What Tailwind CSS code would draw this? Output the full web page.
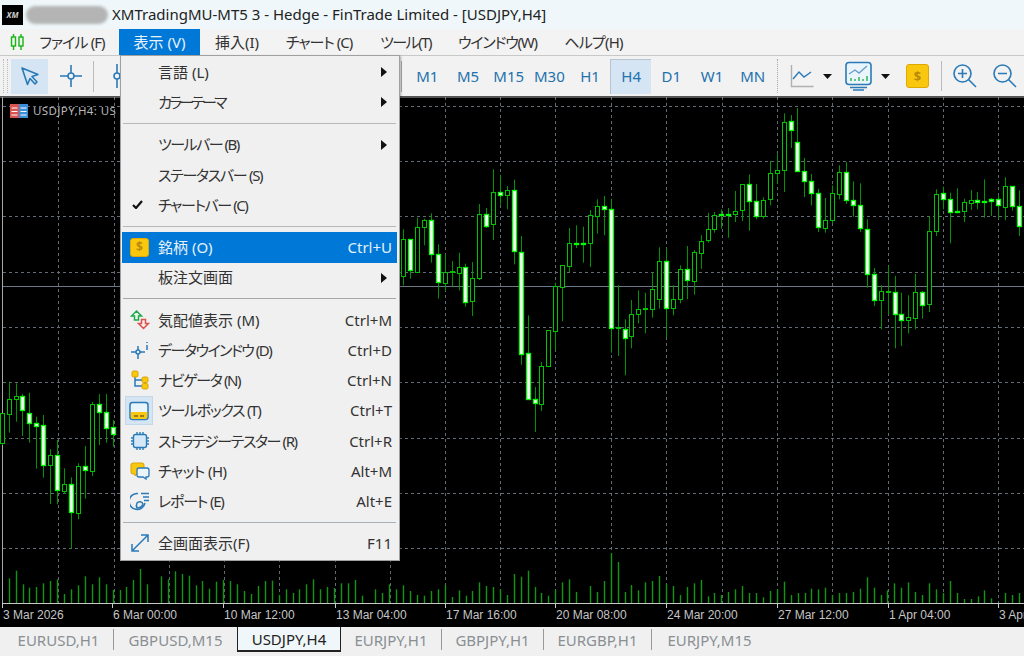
<!DOCTYPE html>
<html lang="ja">
<head>
<meta charset="utf-8">
<script src="https://cdn.jsdelivr.net/npm/@tailwindcss/browser@4"></script>
<title>MT5</title>
</head>
<body>
<div class="relative flex h-[656px] w-[1024px] flex-col overflow-hidden bg-[#f0f0f0] font-['Noto_Sans','Noto_Sans_CJK_JP',sans-serif] text-[#222] [font-feature-settings:'palt']">

  <!-- title bar -->
  <div class="flex h-[29px] items-center bg-[#eff7fa] pl-[2px]">
    <div class="flex h-[20px] w-[21px] items-center justify-center bg-black text-[8px] font-bold italic leading-none text-[#ccc]">XM</div>
    <div class="ml-[3px] h-[18px] w-[82px] rounded-full bg-[#b4b4b4] blur-[1.5px]"></div>
    <div class="ml-[4px] text-[15px] leading-none text-[#222]">XMTradingMU-MT5 3 - Hedge - FinTrade Limited - [USDJPY,H4]</div>
  </div>

  <!-- menu bar -->
  <div class="flex h-[26px] items-stretch bg-[#f3f3f3] text-[15px] text-[#333]">
    <div class="flex w-[25px] items-center justify-end">
      <svg width="15" height="18" viewBox="0 0 15 18" fill="none" stroke="#19b319" stroke-width="1.4"><path d="M3.5 1v16M11 1v16"/><rect x="1.5" y="4" width="4" height="9" fill="#e8f8e8"/><rect x="9" y="4" width="4" height="9" fill="#e8f8e8"/></svg>
    </div>
    <div class="flex w-[94px] items-center justify-center tracking-[-0.9px]">ファイル (F)</div>
    <div class="flex w-[81px] items-center justify-center bg-[#0078d7] text-[#e8f2fb]">表示 (V)</div>
    <div class="flex w-[74px] items-center justify-center">挿入(I)</div>
    <div class="flex w-[90px] items-center justify-center tracking-[-1px]">チャート (C)</div>
    <div class="flex w-[83px] items-center justify-center tracking-[-1.5px]">ツール(T)</div>
    <div class="flex w-[101px] items-center justify-center tracking-[-1.2px]">ウインドウ(W)</div>
    <div class="flex w-[91px] items-center justify-center tracking-[-0.8px]">ヘルプ(H)</div>
  </div>

  <!-- toolbar -->
  <div class="flex h-[41px] items-center border-t border-[#c8c8c8] bg-[#f2f2f2] text-[15px] text-[#2371ad]">
    <div class="ml-[3px] h-[34px] w-[5px] border-x border-dotted border-[#bbb]"></div>
    <div class="ml-[3px] flex h-[35px] w-[37px] items-center justify-center bg-[#d5e5f3]">
      <svg width="20" height="20" viewBox="0 0 20 20" fill="none" stroke="#2a7ab8" stroke-width="1.6" stroke-linejoin="round"><path d="M2 2l16 6.5-6 2 5 5.5-2 2-5-5.5-2.5 6z"/></svg>
    </div>
    <div class="ml-[3px] flex h-[35px] w-[40px] items-center justify-center">
      <svg width="24" height="24" viewBox="0 0 24 24" fill="none" stroke="#2a7ab8" stroke-width="1.6"><circle cx="12" cy="12" r="3"/><path d="M12 1v8M12 15v8M1 12h8M15 12h8"/></svg>
    </div>
    <div class="ml-[2px] h-[31px] w-px bg-[#bbb]"></div>
    <svg class="ml-[18px]" width="10" height="26" viewBox="0 0 10 26" fill="none" stroke="#2a7ab8" stroke-width="1.6"><circle cx="5" cy="13" r="3"/><path d="M5 1v9M5 16v9"/></svg>
    <div class="ml-[279px] h-[31px] w-px bg-[#aaa]"></div>
    <div class="ml-[5px] flex w-[366px] items-center">
      <div class="flex h-[35px] w-[40.7px] items-center justify-center">M1</div>
      <div class="flex h-[35px] w-[40.7px] items-center justify-center">M5</div>
      <div class="flex h-[35px] w-[40.7px] items-center justify-center">M15</div>
      <div class="flex h-[35px] w-[40.7px] items-center justify-center">M30</div>
      <div class="flex h-[35px] w-[40.7px] items-center justify-center">H1</div>
      <div class="flex h-[35px] w-[40.7px] items-center justify-center border-l border-t border-[#b8c4cf] bg-[#d5e5f3]">H4</div>
      <div class="flex h-[35px] w-[40.7px] items-center justify-center">D1</div>
      <div class="flex h-[35px] w-[40.7px] items-center justify-center">W1</div>
      <div class="flex h-[35px] w-[40.7px] items-center justify-center">MN</div>
    </div>
    <div class="ml-[4px] h-[34px] w-[3px] border-l border-dotted border-[#aaa]"></div>
    <div class="ml-[10px] flex items-center">
      <svg width="24" height="24" viewBox="0 0 24 24" fill="none" stroke-width="1.4"><path d="M1.5 1v21.5h22" stroke="#b0b0b0"/><path d="M3 15l6-7 5 5 7-5" stroke="#2a7ab8"/></svg>
    </div>
    <svg class="ml-[9px]" width="9" height="5" viewBox="0 0 9 5"><path d="M0 0h9L4.5 5z" fill="#111"/></svg>
    <svg class="ml-[13px]" width="27" height="30" viewBox="0 0 27 30" fill="none"><rect x="1" y="1.500" width="25" height="22" rx="3" fill="#eaf4fb" stroke="#2a7ab8" stroke-width="1.6"/><path d="M4 13l6-4 4 3 8-7" stroke="#6a9fc6" stroke-width="1.400"/><path d="M6 20v-3M10 20v-2M14 20v-4M18 20v-2M22 20v-5" stroke="#22b14c" stroke-width="1.400"/><path d="M5 26.500h17M8 29h11" stroke="#2a7ab8" stroke-width="1.500"/></svg>
    <svg class="ml-[9px]" width="9" height="5" viewBox="0 0 9 5"><path d="M0 0h9L4.5 5z" fill="#111"/></svg>
    <div class="ml-[16px] flex h-[24px] w-[23px] items-center justify-center rounded-[3px] border border-[#e0a800] bg-[#f9c80e] text-[13px] font-bold leading-none text-[#b98a0a]">$</div>
    <div class="ml-[12px] h-[30px] w-px bg-[#bbb]"></div>
    <svg class="ml-[11px]" width="24" height="24" viewBox="0 0 24 24" fill="none" stroke="#2a7ab8" stroke-width="1.600"><circle cx="9.500" cy="9.500" r="8.500"/><path d="M15.500 15.500L23 23M5 9.500h9M9.500 5v9"/></svg>
    <svg class="ml-[16px]" width="24" height="24" viewBox="0 0 24 24" fill="none" stroke="#2a7ab8" stroke-width="1.600"><circle cx="9.500" cy="9.500" r="8.500"/><path d="M15.500 15.500L23 23M5 9.500h9"/></svg>
  </div>

  <!-- chart -->
  <div class="relative h-[531px] w-full bg-black">
    <svg id="chart" class="block font-['Liberation_Sans',sans-serif]" width="1024" height="531" viewBox="0 96 1024 531"></svg>
    <div class="absolute left-[10px] top-[8px] flex items-center text-[11.5px] leading-none tracking-[0.4px] text-[#b8b8b8]">
      <svg width="18" height="14" viewBox="0 0 18 14"><rect width="9" height="14" fill="#d9534f"/><rect x="9" width="9" height="14" fill="#3b8fd9"/><path d="M1.500 4h6M1.500 7.500h6M1.500 11h6M10.500 4h6M10.500 7.500h6M10.500 11h6" stroke="#fff" stroke-width="1"/></svg>
      <span class="ml-[5px]">USDJPY,H4: US</span>
    </div>
  </div>

  <!-- tabs -->
  <div class="flex h-[29px] items-start bg-[#f0f0f0] text-[15px] leading-none text-[#8a8f94]">
    <div class="mt-[2px] flex h-[21px] w-[114px] items-center justify-center border-r border-[#999] pl-[4px] pt-[2px]">EURUSD,H1</div>
    <div class="mt-[2px] flex h-[21px] w-[123px] items-center justify-center pt-[2px]">GBPUSD,M15</div>
    <div class="-mt-px flex h-[26px] w-[104px] items-center justify-center border border-[#222] border-b-2 bg-[#eff7fb] pt-[1px] text-[#222]">USDJPY,H4</div>
    <div class="mt-[2px] flex h-[21px] w-[101px] items-center justify-center border-r border-[#999] pt-[2px]">EURJPY,H1</div>
    <div class="mt-[2px] flex h-[21px] w-[102px] items-center justify-center border-r border-[#999] pt-[2px]">GBPJPY,H1</div>
    <div class="mt-[2px] flex h-[21px] w-[108px] items-center justify-center border-r border-[#999] pt-[2px]">EURGBP,H1</div>
    <div class="mt-[2px] flex h-[21px] w-[115px] items-center justify-center pt-[2px]">EURJPY,M15</div>
  </div>

  <!-- dropdown -->
  <div class="absolute left-[120px] top-[55px] w-[280px] border border-[#a0a0a0] bg-[#f0f0f0] pb-[1px] pl-[1px] pr-[2px] pt-[1px] text-[15px] text-[#333] shadow-[1px_1px_2px_rgba(0,0,0,0.3)]">
    <div class="flex h-[30.25px] items-center pl-[36px] pr-[10px]"><span class="flex-1">言語 (L)</span><svg width="6" height="10" viewBox="0 0 6 10"><path d="M0 0l6 5-6 5z" fill="#111"/></svg></div>
    <div class="flex h-[30.25px] items-center pl-[36px] pr-[10px]"><span class="flex-1 tracking-[-2.8px]">カラーテーマ</span><svg width="6" height="10" viewBox="0 0 6 10"><path d="M0 0l6 5-6 5z" fill="#111"/></svg></div>
    <div class="flex h-[12px] items-center px-[1px]"><div class="h-px w-full bg-[#b8b8b8]"></div></div>
    <div class="flex h-[30.25px] items-center pl-[36px] pr-[10px]"><span class="flex-1 tracking-[-1.5px]">ツールバー (B)</span><svg width="6" height="10" viewBox="0 0 6 10"><path d="M0 0l6 5-6 5z" fill="#111"/></svg></div>
    <div class="flex h-[30.25px] items-center pl-[36px] pr-[10px]"><span class="flex-1 tracking-[-1.3px]">ステータスバー (S)</span></div>
    <div class="relative flex h-[30.25px] items-center pl-[36px] pr-[10px]"><svg class="absolute left-[10px] top-[10px]" width="11" height="9" viewBox="0 0 11 9" fill="none" stroke="#111" stroke-width="2.200"><path d="M1 5l3 3 6-7"/></svg><span class="flex-1 tracking-[-1.4px]">チャートバー (C)</span></div>
    <div class="flex h-[12px] items-center px-[1px]"><div class="h-px w-full bg-[#b8b8b8]"></div></div>
    <div class="flex h-[30.25px] items-center bg-[#0078d7] pl-[8px] pr-[5px] text-[#e6f1fa]">
      <div class="flex h-[19px] w-[19px] items-center justify-center rounded-[3px] border border-[#e0a800] bg-[#f9c80e] text-[12px] font-bold leading-none text-[#b98a0a]">$</div>
      <span class="ml-[9px] flex-1">銘柄 (O)</span><span>Ctrl+U</span>
    </div>
    <div class="flex h-[30.25px] items-center pl-[36px] pr-[10px]"><span class="flex-1">板注文画面</span><svg width="6" height="10" viewBox="0 0 6 10"><path d="M0 0l6 5-6 5z" fill="#111"/></svg></div>
    <div class="flex h-[12px] items-center px-[1px]"><div class="h-px w-full bg-[#a8a8a8]"></div></div>
    <div class="flex h-[30.25px] items-center pl-[8px] pr-[5px]">
      <svg width="20" height="20" viewBox="0 0 20 20" fill="none" stroke-width="1.500"><path d="M6.500 1L1.500 6h3v4h4V6h3z" fill="#e8f8ee" stroke="#22a84a"/><path d="M13.500 18.500l5-5h-3v-4h-4v4h-3z" fill="#fbeaea" stroke="#d9534f"/></svg>
      <span class="ml-[8px] flex-1">気配値表示 (M)</span><span>Ctrl+M</span>
    </div>
    <div class="flex h-[30.25px] items-center pl-[8px] pr-[5px]">
      <svg width="20" height="20" viewBox="0 0 20 20" fill="none" stroke="#2a7ab8" stroke-width="1.500"><circle cx="8" cy="12" r="2"/><path d="M8 6v4M8 14v5M1 12h5M10 12h5M17 2v1M17 5v5"/></svg>
      <span class="ml-[8px] flex-1 tracking-[-1.5px]">データウインドウ (D)</span><span>Ctrl+D</span>
    </div>
    <div class="flex h-[30.25px] items-center pl-[8px] pr-[5px]">
      <svg width="20" height="20" viewBox="0 0 20 20" fill="none"><path d="M5 6v10h8M5 10h8" stroke="#2a7ab8" stroke-width="1.500"/><rect x="2" y="1" width="6" height="6" rx="1.500" fill="#f9c80e" stroke="#d9a300"/><rect x="12" y="7" width="6" height="5.500" rx="1.500" fill="#f9c80e" stroke="#d9a300"/><rect x="12" y="13.500" width="6" height="5.500" rx="1.500" fill="#f9c80e" stroke="#d9a300"/></svg>
      <span class="ml-[8px] flex-1 tracking-[-1.4px]">ナビゲータ (N)</span><span>Ctrl+N</span>
    </div>
    <div class="flex h-[30.25px] items-center pl-[3px] pr-[5px]">
      <div class="flex h-[29px] w-[28px] items-center justify-center border border-[#c5d8e8] bg-[#d5e5f3]">
        <svg width="20" height="20" viewBox="0 0 20 20"><rect x="1" y="1.500" width="18" height="17" rx="2.500" fill="#eaf4fb" stroke="#2a7ab8" stroke-width="1.500"/><path d="M1.800 11h16.400v5a2 2 0 0 1-2 2H3.800a2 2 0 0 1-2-2z" fill="#f9c80e"/><path d="M5 15h4M11 15h4" stroke="#333" stroke-width="1"/></svg>
      </div>
      <span class="ml-[5px] flex-1 tracking-[-1.3px]">ツールボックス (T)</span><span>Ctrl+T</span>
    </div>
    <div class="flex h-[30.25px] items-center pl-[8px] pr-[5px]">
      <svg width="20" height="20" viewBox="0 0 20 20" fill="none" stroke="#2a7ab8" stroke-width="1.400"><rect x="3.500" y="3.500" width="13" height="13" rx="2" fill="#d5e8f7"/><path d="M7 1v2M10 1v2M13 1v2M7 17v2M10 17v2M13 17v2M1 7h2M1 10h2M1 13h2M17 7h2M17 10h2M17 13h2"/></svg>
      <span class="ml-[8px] flex-1 tracking-[-1.4px]">ストラテジーテスター (R)</span><span>Ctrl+R</span>
    </div>
    <div class="flex h-[30.25px] items-center pl-[8px] pr-[5px]">
      <svg width="20" height="20" viewBox="0 0 20 20"><path d="M3 2h9a2 2 0 0 1 2 2v7a2 2 0 0 1-2 2H7l-2 2v-2H3a2 2 0 0 1-2-2V4a2 2 0 0 1 2-2z" fill="#f9c80e" stroke="#d9a300"/><path d="M9 7h8a2 2 0 0 1 2 2v5a2 2 0 0 1-2 2h-1v2l-3-2H9a2 2 0 0 1-2-2V9a2 2 0 0 1 2-2z" fill="#eaf4fb" stroke="#2a7ab8" stroke-width="1.300"/></svg>
      <span class="ml-[8px] flex-1 tracking-[-0.6px]">チャット (H)</span><span>Alt+M</span>
    </div>
    <div class="flex h-[30.25px] items-center pl-[8px] pr-[5px]">
      <svg width="20" height="20" viewBox="0 0 20 20" fill="none" stroke="#2a7ab8" stroke-width="1.500"><path d="M8 2.500A8 8 0 1 0 15 12M11 2.500h8M13 6h6M14 9.500h5"/><path d="M7 12a3.500 3.500 0 0 1 6 1c-1 3-3 4-6 4-1-2-1-3 0-5z"/></svg>
      <span class="ml-[8px] flex-1 tracking-[-1.2px]">レポート (E)</span><span>Alt+E</span>
    </div>
    <div class="flex h-[12px] items-center px-[1px]"><div class="h-px w-full bg-[#a8b0b8]"></div></div>
    <div class="flex h-[30.25px] items-center pb-px pl-[8px] pr-[5px]">
      <svg width="20" height="20" viewBox="0 0 20 20" fill="none" stroke="#2a7ab8" stroke-width="1.500"><path d="M2 18L18 2M11 2h7v7M2 11v7h7"/></svg>
      <span class="ml-[8px] flex-1">全画面表示(F)</span><span>F11</span>
    </div>
  </div>
</div>

<script>
const svg = document.getElementById('chart');
const NS = 'http://www.w3.org/2000/svg';
function el(name, attrs, text) {
  const e = document.createElementNS(NS, name);
  for (const k in attrs) e.setAttribute(k, attrs[k]);
  if (text) e.textContent = text;
  svg.appendChild(e);
}
function line(x1, y1, x2, y2, stroke, dash, width) {
  const a = {x1, y1, x2, y2, stroke, 'stroke-width': width || 1};
  if (dash) a['stroke-dasharray'] = dash;
  el('line', a);
}
const snap = v => Math.round(v) + 0.5;

[106, 161.3, 216.3, 271.7, 326.7, 382.3, 438, 493, 548].forEach(y => line(3, snap(y), 1024, snap(y), '#626a74', '3 3'));
[58, 113.5, 168.7, 224, 279, 334.5, 390, 445, 500.3, 555.3, 611, 666.3, 721.7, 777, 832.3, 887.7, 943, 998.3].forEach(x => line(snap(x), 97, snap(x), 603, '#626a74', '3 3'));
line(0, 97, 1024, 97, '#a8a8a8');
line(2.5, 97, 2.5, 603, '#a8a8a8');
line(3, 286.5, 1024, 286.5, '#6c7888');
line(2, 603.5, 1024, 603.5, '#c8c8c8');

const vol1 = [[27,115],[48,92],[69,133],[89,143],[110,141],[131,130],[152,123],[172,118],[193,162],[214,148],[235,136],[255,109],[276,133],[297,112],[318,133],[339,150],[360,150],[380,141],[401,120],[421,87],[442,133],[484,109],[505,118],[525,94],[546,102],[567,107],[588,136],[608,123],[629,146],[650,125],[671,120],[691,123],[712,133],[733,153],[754,162],[774,138],[795,123],[816,122],[837,165],[858,148],[879,159],[899,148],[920,133],[941,118],[962,148],[983,141],[1003,144],[1023,130],[1044,130],[1065,120],[1086,167],[1127,148],[1148,159],[1169,133],[1190,148],[1210,136],[1231,153],[1252,165],[1273,167],[1294,153],[1314,148],[1335,135],[1356,171],[1377,151],[1398,167],[1418,153],[1439,127],[1460,138],[1481,141],[1502,148],[1522,165]];
const vol2 = [[6,102],[27,110],[48,92],[69,141],[89,159],[110,167],[131,150],[152,127],[172,118],[193,156],[235,138],[255,156],[276,123],[297,40],[318,66],[339,156],[359,135],[380,151],[401,127],[421,123],[442,108],[463,133],[484,138],[505,165],[525,141],[546,130],[567,120],[588,169],[608,159],[629,165],[650,156],[671,148],[691,138],[712,159],[733,159],[754,172],[774,153],[795,148],[816,125],[837,165],[858,159],[879,159],[899,146],[920,148],[941,143],[962,165],[983,159],[1003,159],[1023,156],[1044,146],[1065,112],[1086,143],[1107,165],[1127,151],[1148,130],[1169,143],[1190,127],[1210,156],[1231,165],[1252,130],[1273,148],[1294,159],[1314,123],[1335,159],[1356,177],[1377,177],[1398,169],[1418,151],[1439,175],[1481,159],[1502,165],[1522,159]];
vol1.forEach(([x, t]) => line(snap(x / 3 - 0.5), 540 + t / 3, snap(x / 3 - 0.5), 603, '#0f980f', null, 1.4));
vol2.forEach(([x, t]) => line(snap(512 + x / 3 - 0.5), 540 + t / 3, snap(512 + x / 3 - 0.5), 603, '#0f980f', null, 1.4));

function candles(list, ox, oy) {
  list.forEach(([x, hi, lo, top, bot, w]) => {
    const cx = snap(ox + x / 3 - 0.5);
    line(cx, oy + hi / 3, cx, oy + lo / 3, '#009400');
    const y1 = Math.round(oy + top / 3) + 0.5;
    const h = Math.max(1, Math.round((bot - top) / 3));
    el('rect', {x: cx - 2, y: y1, width: 4, height: h, fill: w ? '#fff' : '#000', stroke: w ? '#00ff00' : '#00c400', 'stroke-width': w ? 1.3 : 1});
  });
}
candles([
[10,400,568,428,538,0],[31,430,548,428,522,1],[52,365,528,392,526,0],[73,368,448,371,393,0],[93,352,500,372,473,1],[114,445,608,473,558,1],[135,475,585,527,560,0],[156,495,572,526,527,0],[177,470,583,512,530,0],[197,503,632,512,616,1],[217,498,660,546,616,0],[238,324,552,353,546,0],[259,336,396,353,388,1],[280,220,432,289,386,0],[301,236,326,289,299,1],[322,270,340,283,299,0],[342,251,505,283,467,1],[363,420,806,467,772,1],[384,658,909,771,909,1],[405,873,1008,909,921,1],[425,798,945,810,924,0],[446,703,812,703,812,0],[467,560,762,570,705,0],[488,508,676,508,575,0],[508,396,528,442,510,0],[529,388,456,441,445,1],[550,392,500,440,444,1],[571,342,513,358,443,0],[592,310,413,330,360,0],[612,300,418,330,338,1],[633,308,770,338,696,1],[654,568,780,694,698,0],[675,670,838,698,724,1],[695,612,757,655,722,0],[716,583,682,638,652,0],[737,590,712,636,639,0],[758,530,665,579,638,0],[778,454,638,494,607,0],[799,458,725,494,636,1],[820,568,658,610,637,0],[841,508,622,520,611,0],[861,450,610,520,553,1],[882,462,596,467,554,0],[903,418,518,434,469,0],[924,350,440,400,434,0]
], 400, 96);
candles([
[8,348,410,358,400,0],[29,340,398,355,359,1],[50,336,425,354,357,1],[71,285,378,344,353,0],[91,265,375,265,343,0],[112,235,404,265,317,1],[133,264,370,315,359,1],[154,304,368,311,360,0],[174,195,328,232,310,0],[195,175,262,223,233,0],[216,52,288,79,224,0],[237,57,156,76,102,1],[257,36,228,139,227,1],[278,186,303,226,255,1],[299,234,328,255,291,1],[320,278,408,292,395,1],[341,306,410,372,395,0],[361,268,382,292,372,0],[382,208,310,229,294,0],[403,198,324,227,312,1],[424,256,362,312,328,1],[445,262,408,328,398,1],[465,370,575,398,532,1],[486,516,630,533,612,1],[507,568,700,586,614,0],[528,510,655,586,587,0],[549,540,757,587,654,1],[569,590,750,655,673,1],[590,598,712,664,673,0],[611,534,700,587,664,0],[632,585,668,587,626,1],[652,360,648,406,625,0],[673,280,420,293,404,0],[694,272,340,292,310,1],[714,290,442,310,348,1],[735,277,352,345,349,1],[756,308,378,319,347,0],[777,282,342,312,320,0],[797,288,340,312,317,1],[818,250,365,314,316,1],[839,306,360,309,314,1],[859,298,368,310,327,1],[880,244,373,271,335,0],[901,270,344,271,330,1],[922,283,420,330,390,1]
], 712, 96);
candles([
[7,130,225,130,220,0],[27,35,188,88,132,0],[48,40,155,79,89,0],[68,72,198,79,122,1],[89,68,218,128,158,1],[110,140,296,158,166,1],[131,135,323,165,286,1],[152,238,402,255,286,0],[172,210,403,255,361,1],[193,295,372,341,361,0],[214,322,535,343,428,1],[235,280,448,289,430,0],[255,228,386,289,301,1],[276,96,318,101,302,0],[297,72,225,101,125,1],[318,72,218,125,172,1],[339,150,230,172,192,1]
], 0, 370);

[[2,'3 Mar 2026'],[112,'6 Mar 00:00'],[223,'10 Mar 12:00'],[335,'13 Mar 04:00'],[445,'17 Mar 16:00'],[555,'20 Mar 08:00'],[666,'24 Mar 20:00'],[777,'27 Mar 12:00'],[888,'1 Apr 04:00'],[998,'3 Apr']].forEach(([x, t]) => {
  line(x + 0.5, 603, x + 0.5, 608, '#c8c8c8');
  el('text', {x: x + 1, y: 619, fill: '#c4c4c4', 'font-size': 12}, t);
});
</script>
</body>
</html>
